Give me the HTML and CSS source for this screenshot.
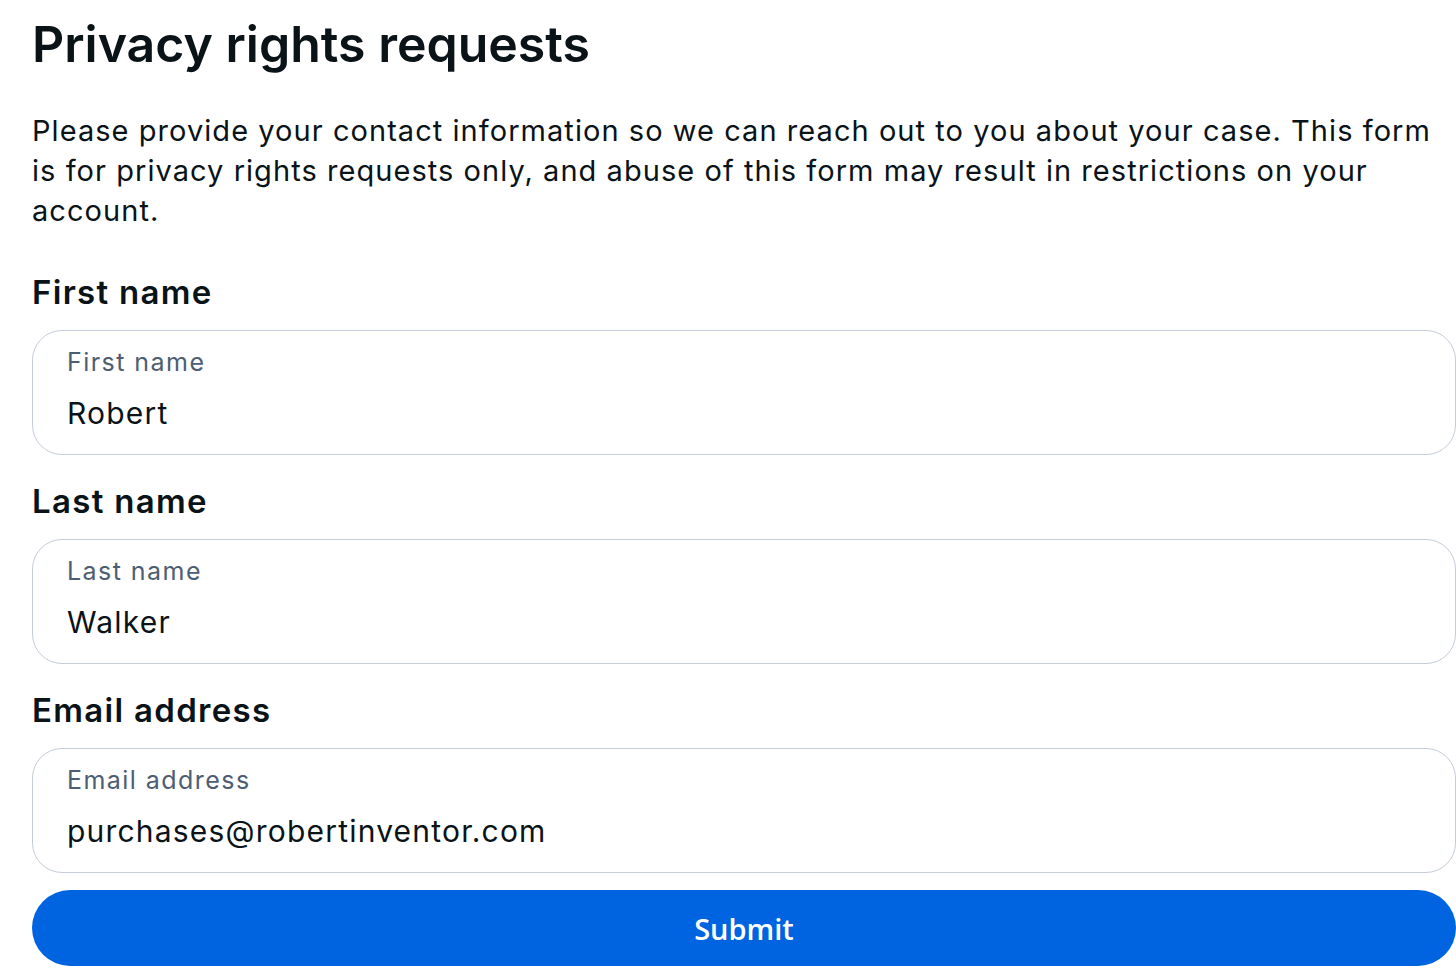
FILE: index.html
```html
<!DOCTYPE html>
<html lang="en">
<head>
<meta charset="utf-8">
<title>Privacy rights requests</title>
<link rel="stylesheet" href="styles.css">
</head>
<body>
<main class="page">
  <h1 class="title">Privacy rights requests</h1>
  <p class="intro">Please provide your contact information so we can reach out to you about your case. This form is for privacy rights requests only, and abuse of this form may result in restrictions on your account.</p>
  <form class="form">
    <div class="field">
      <label class="field-label">First name</label>
      <div class="input">
        <span class="input-label">First name</span>
        <span class="input-value">Robert</span>
      </div>
    </div>
    <div class="field">
      <label class="field-label">Last name</label>
      <div class="input">
        <span class="input-label">Last name</span>
        <span class="input-value">Walker</span>
      </div>
    </div>
    <div class="field">
      <label class="field-label">Email address</label>
      <div class="input">
        <span class="input-label">Email address</span>
        <span class="input-value">purchases@robertinventor.com</span>
      </div>
    </div>
    <button type="button" class="submit">Submit</button>
  </form>
</main>
</body>
</html>
```
FILE: styles.css
```css
html, body {
  margin: 0;
  padding: 0;
  background: #ffffff;
  overflow: hidden;
}
body {
  font-family: Inter, "Noto Sans", sans-serif;
  color: #0a1317;
}
.page {
  padding: 14px 0 0 32px;
  width: 1424px;
}
.title {
  margin: 0;
  font-size: 50px;
  line-height: 60px;
  font-weight: 600;
}
.intro {
  margin: 37px 0 0 0;
  font-size: 29px;
  line-height: 40px;
  font-weight: 400;
  letter-spacing: 1.05px;
}
.form {
  display: flex;
  flex-direction: column;
  margin-top: 41px;
}
.field {
  display: flex;
  flex-direction: column;
  gap: 18px;
  margin-bottom: 26px;
}
.field:last-of-type {
  margin-bottom: 17px;
}
.field-label {
  font-size: 33px;
  line-height: 40px;
  font-weight: 600;
  letter-spacing: 1.3px;
}
.input {
  box-sizing: border-box;
  height: 125px;
  border: 1.5px solid #c3ccd8;
  border-radius: 30px;
  padding: 16px 34px 0;
  display: flex;
  flex-direction: column;
  gap: 18px;
}
.input-label {
  font-size: 25px;
  line-height: 30px;
  color: #4d5e73;
  letter-spacing: 1.45px;
}
.input-value {
  font-size: 30px;
  line-height: 36px;
  color: #0a1317;
  letter-spacing: 1.2px;
}
.submit {
  height: 76px;
  border: 0;
  border-radius: 38px;
  background: #0064e0;
  color: #ffffff;
  font-family: "Open Sans", "Noto Sans", sans-serif;
  font-size: 29px;
  font-weight: 600;
  padding: 0;
}
```
